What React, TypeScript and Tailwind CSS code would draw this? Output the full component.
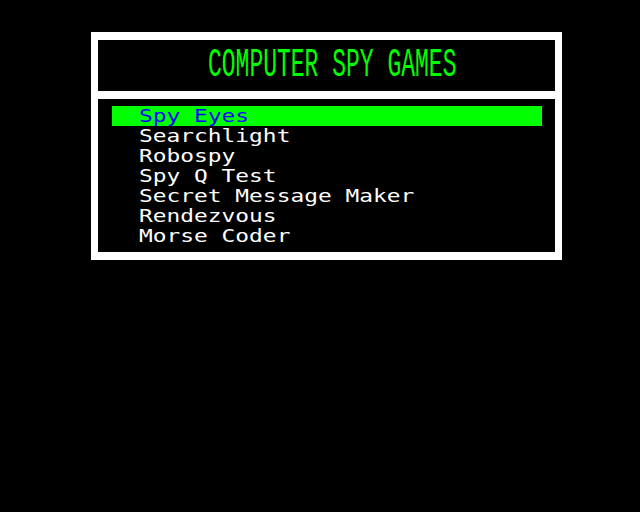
import React from "react";

const items = [
  "Spy Eyes",
  "Searchlight",
  "Robospy",
  "Spy Q Test",
  "Secret Message Maker",
  "Rendezvous",
  "Morse Coder",
];

export default function App() {
  return (
    <div className="w-[640px] h-[512px] bg-black overflow-hidden">
      <div className="ml-[91px] mt-[32px] w-[471px] border-white border-x-[7px] border-y-[8px] bg-black">
        <div className="h-[51px] flex items-center pl-[110px] pt-[2px]">
          <span
            className="inline-block text-[#00ff00] scale-y-[1.75] origin-center whitespace-pre leading-none"
            style={{ fontFamily: '"Liberation Mono", monospace', fontSize: "23px" }}
          >
            COMPUTER SPY GAMES
          </span>
        </div>
        <div className="h-[8px] bg-white" />
        <div className="pt-[7px] pb-[6px] pl-[14px] pr-[13px]">
          {items.map((it, i) => (
            <div
              key={it}
              className={`h-[20px] flex items-center pl-[27px] ${i === 0 ? "bg-[#00ff00] text-[#0000ff]" : "text-white"}`}
            >
              <span
                className="inline-block whitespace-pre origin-left scale-x-[1.27] leading-none"
                style={{ fontFamily: '"DejaVu Sans Mono", monospace', fontSize: "18px" }}
              >
                {it}
              </span>
            </div>
          ))}
        </div>
      </div>
    </div>
  );
}
